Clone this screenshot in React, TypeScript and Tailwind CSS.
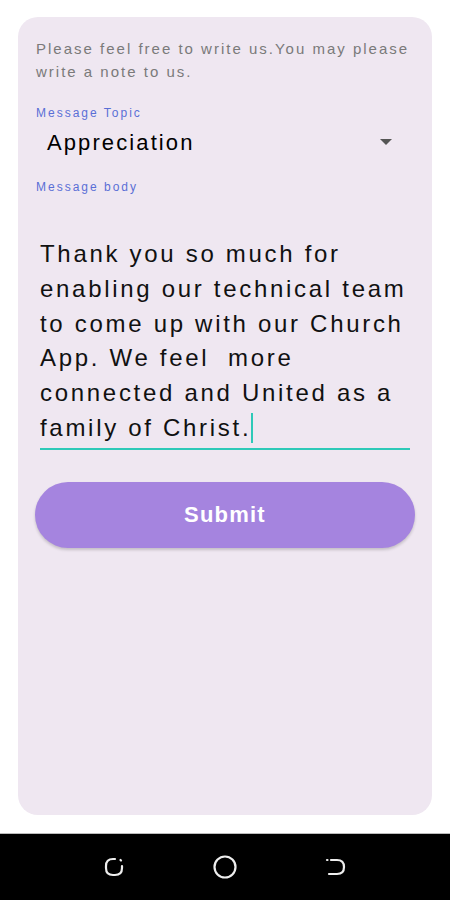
const bodyLines = [
  'Thank you so much for',
  'enabling our technical team',
  'to come up with our Church',
  'App. We feel\u00a0 more',
  'connected and United as a',
];

export default function App() {
  return (
    <div className="w-[450px] h-[900px] bg-white flex flex-col overflow-hidden" style={{ fontFamily: '"Liberation Sans", Arial, sans-serif' }}>
      <div className="flex-1 px-[18px] pt-[17px] pb-[18px]">
        {/* Card */}
        <div className="h-full bg-[#efe7f1] rounded-[20px] px-[18px] pt-[20px]">
          <p className="text-[15px] leading-[23px] text-[#7a7a7a] tracking-[2px] whitespace-nowrap">
            Please feel free to write us.You may please
            <br />
            write a note to us.
          </p>

          <div className="mt-[23px] text-[12px] leading-[14px] text-[#5a6fd6] tracking-[2px]">Message Topic</div>
          <div className="mt-[4px] flex items-center justify-between pl-[11px] pr-[22px] h-[36px]">
            <span className="text-[22px] text-black tracking-[2.1px]">Appreciation</span>
            <svg width="12" height="6" viewBox="0 0 12 6">
              <path d="M0 0 L12 0 L6 6 Z" fill="#555" />
            </svg>
          </div>

          <div className="mt-[20px] text-[12px] leading-[14px] text-[#5a6fd6] tracking-[2px]">Message body</div>

          <div className="mt-[43px] mx-[4px] border-b-2 border-[#2ec9b8] pb-[2px]">
            <div className="text-[24px] leading-[34.8px] text-[#111] tracking-[2.7px] whitespace-nowrap">
              {bodyLines.map((l) => (
                <div key={l}>{l}</div>
              ))}
              <div className="flex items-center">
                family of Christ.
                <span className="inline-block w-[2px] h-[30px] bg-[#2ec9b8]" />
              </div>
            </div>
          </div>

          <button className="mt-[32px] -mx-[1px] w-[calc(100%+2px)] h-[66px] rounded-full bg-[#a584df] text-white text-[22px] font-bold tracking-[1.2px] shadow-[0_2px_3px_rgba(0,0,0,0.18)]">
            Submit
          </button>
        </div>
      </div>

      {/* Android nav bar */}
      <div className="h-[67px] bg-black border-t border-[#bbb] flex items-center justify-between px-[103px]">
        <svg width="22" height="22" viewBox="0 0 22 22" fill="none" stroke="#eee" strokeWidth="2.2" strokeLinecap="round">
          <path d="M12 3 H10 Q3 3 3 10 V12 Q3 19 10 19 H12 Q19 19 19 12 V10" />
          <path d="M17.5 4 L18 4.5" />
        </svg>
        <svg width="26" height="26" viewBox="0 0 26 26" fill="none" stroke="#eee" strokeWidth="2.2">
          <circle cx="13" cy="13" r="10.5" />
        </svg>
        <svg width="22" height="22" viewBox="0 0 22 22" fill="none" stroke="#eee" strokeWidth="2.2" strokeLinecap="round">
          <path d="M6 4 H12 Q19 4 19 11 Q19 18 12 18 H4" />
          <path d="M2 4 L2.5 4" />
        </svg>
      </div>
    </div>
  );
}
